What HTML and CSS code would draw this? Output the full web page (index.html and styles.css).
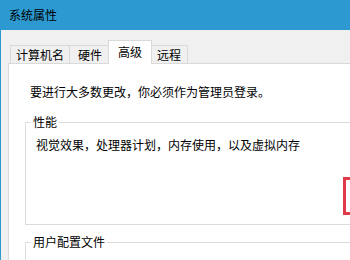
FILE: index.html
```html
<!DOCTYPE html>
<html lang="zh-CN">

<head>
    <meta charset="UTF-8">
    <meta name="viewport" content="width=device-width, initial-scale=1.0">
    <title>系统属性</title>

    <link rel="stylesheet" href="styles.css">
</head>

<body>
    <div class="window">
        <div class="title-bar">系统属性</div>
        <div class="client">
            <ul class="tab-list">
                <li class="tab">计算机名</li>
                <li class="tab">硬件</li>
                <li class="tab active">高级</li>
                <li class="tab">远程</li>
            </ul>
            <section class="tab-panel">
                <p class="admin-note">要进行大多数更改，你必须作为管理员登录。</p>
                <fieldset class="group">
                    <legend>性能</legend>
                    <p class="group-text">视觉效果，处理器计划，内存使用，以及虚拟内存</p>
                    <div class="settings-btn"></div>
                </fieldset>
                <fieldset class="group">
                    <legend>用户配置文件</legend>
                </fieldset>
            </section>
        </div>
    </div>
</body>

</html>
```

FILE: styles.css
```css
body {
    --accent: #2c99d0;
    --line: #d9d9d9;
}

body,
body * {
    padding: 0;
    margin: 0;
    box-sizing: border-box;
    font-family: 'Noto Sans CJK SC', sans-serif;
    font-size: 12px;
    color: #000;
}

body ul {
    list-style: none;
}

.window {
    width: 350px;
    height: 260px;
    overflow: hidden;
    border-left: 1px solid var(--accent);
    background-color: #f0f0f0;
}

.title-bar {
    height: 30px;
    line-height: 30px;
    padding-left: 8px;
    background-color: var(--accent);
}

.client {
    padding: 10px 0 0 7px;
}

/* tabs */
.tab-list {
    display: flex;
    align-items: flex-end;
    height: 23px;
    padding-left: 2px;
}

.tab {
    height: 18px;
    line-height: 17px;
    padding: 0 5px;
    border: 1px solid var(--line);
    border-bottom: none;
    border-right: none;
}

.tab:nth-child(2) {
    padding: 0 8px;
}

.tab.active {
    position: relative;
    z-index: 1;
    height: 24px;
    line-height: 22px;
    margin: 0 -2px -1px -2px;
    padding: 0 9px;
    border-right: 1px solid var(--line);
    background-color: #fff;
}

.tab:last-child {
    padding: 0 6px 0 6px;
    border-right: 1px solid var(--line);
}

.tab-panel {
    height: 200px;
    padding: 18px 0 0 16px;
    border: 1px solid var(--line);
    border-right: none;
    background-color: #fff;
}

.admin-note {
    line-height: 20px;
    margin-left: 5px;
}

/* group boxes */
.group {
    margin-top: 10px;
    padding: 3px 0 0 5px;
    border: 1px solid #dcdcdc;
    border-right: none;
    overflow: hidden;
}

.group legend {
    line-height: 20px;
    padding: 0 2px;
}

.group:first-of-type {
    height: 113px;
}

.group + .group {
    margin-top: 7px;
    height: 40px;
}

.group-text {
    line-height: 20px;
    margin-left: 5px;
}

.settings-btn {
    width: 40px;
    height: 38px;
    margin: 22px 0 0 312px;
    border: 3px solid #e23a4a;
}
```
